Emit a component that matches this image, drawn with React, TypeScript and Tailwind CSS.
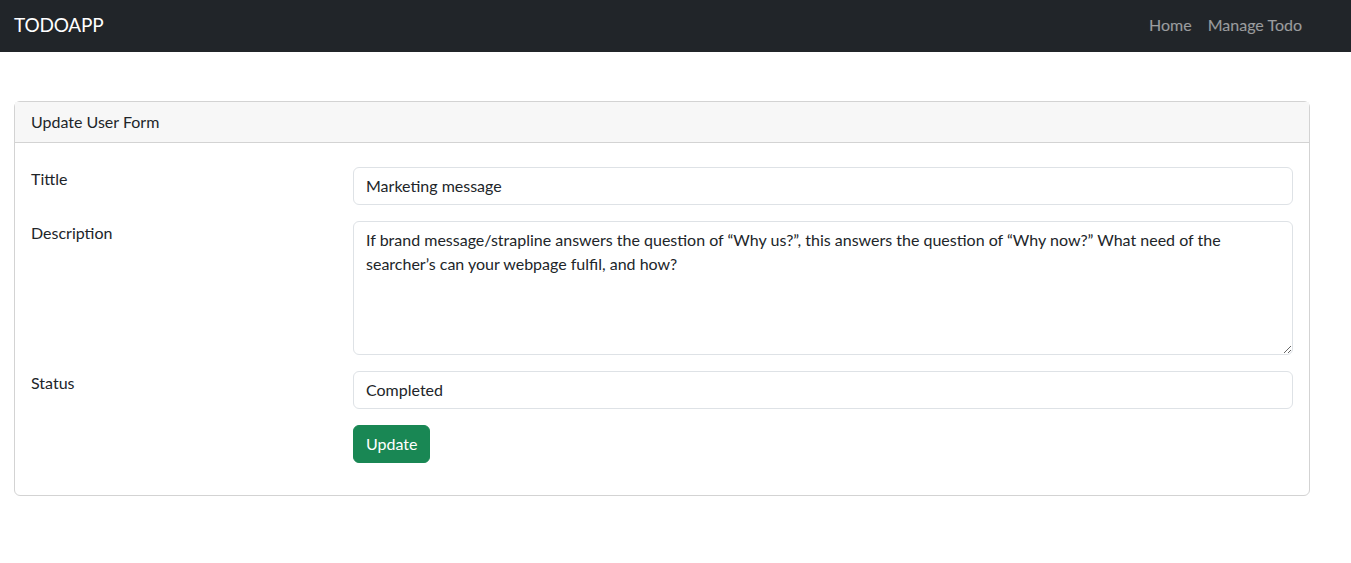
import React from "react";

const font = { fontFamily: '"Segoe UI", Lato, "Liberation Sans", sans-serif' };

function Navbar() {
  return (
    <nav className="flex h-[52px] items-center justify-between bg-[#212529] pl-[14px] pr-[41px]">
      <a href="#" className="-mt-0.5 text-[19px] leading-[30px] tracking-[-0.2px] text-white">
        TODOAPP
      </a>
      <ul className="-mt-0.5 flex items-center">
        <li>
          <a href="#" className="block px-2 py-2 text-[16px] text-white/55">
            Home
          </a>
        </li>
        <li>
          <a href="#" className="block px-2 py-2 text-[16px] text-white/55">
            Manage Todo
          </a>
        </li>
      </ul>
    </nav>
  );
}

const inputCls =
  "block w-full rounded-md border border-[#dee2e6] bg-white px-3 py-1.5 text-[16px] leading-6 text-[#212529] outline-none";

const rowCls = "mb-4 grid grid-cols-[298px_1fr] gap-x-6";

export default function App() {
  return (
    <div className="min-h-screen bg-white text-[16px] leading-6 text-[#212529]" style={font}>
      <Navbar />
      <div className="pl-[14px] pr-[41px] pt-[49px]">
        <div className="rounded-md border border-[#d3d3d3] bg-white">
          <div className="border-b border-[#d3d3d3] bg-[#f7f7f7] px-4 py-2">Update User Form</div>
          <form className="px-4 pb-4 pt-6">
            <div className={rowCls}>
              <label>Tittle</label>
              <input className={inputCls} defaultValue="Marketing message" />
            </div>
            <div className={rowCls}>
              <label>Description</label>
              <textarea
                rows={5}
                className={inputCls}
                defaultValue="If brand message/strapline answers the question of “Why us?”, this answers the question of “Why now?” What need of the searcher’s can your webpage fulfil, and how?"
              />
            </div>
            <div className={rowCls}>
              <label>Status</label>
              <input className={inputCls} defaultValue="Completed" />
            </div>
            <div className={rowCls}>
              <div />
              <div>
                <button
                  type="button"
                  className="rounded-md border border-[#198754] bg-[#198754] px-3 py-1.5 text-[16px] leading-6 text-white"
                >
                  Update
                </button>
              </div>
            </div>
          </form>
        </div>
      </div>
    </div>
  );
}
